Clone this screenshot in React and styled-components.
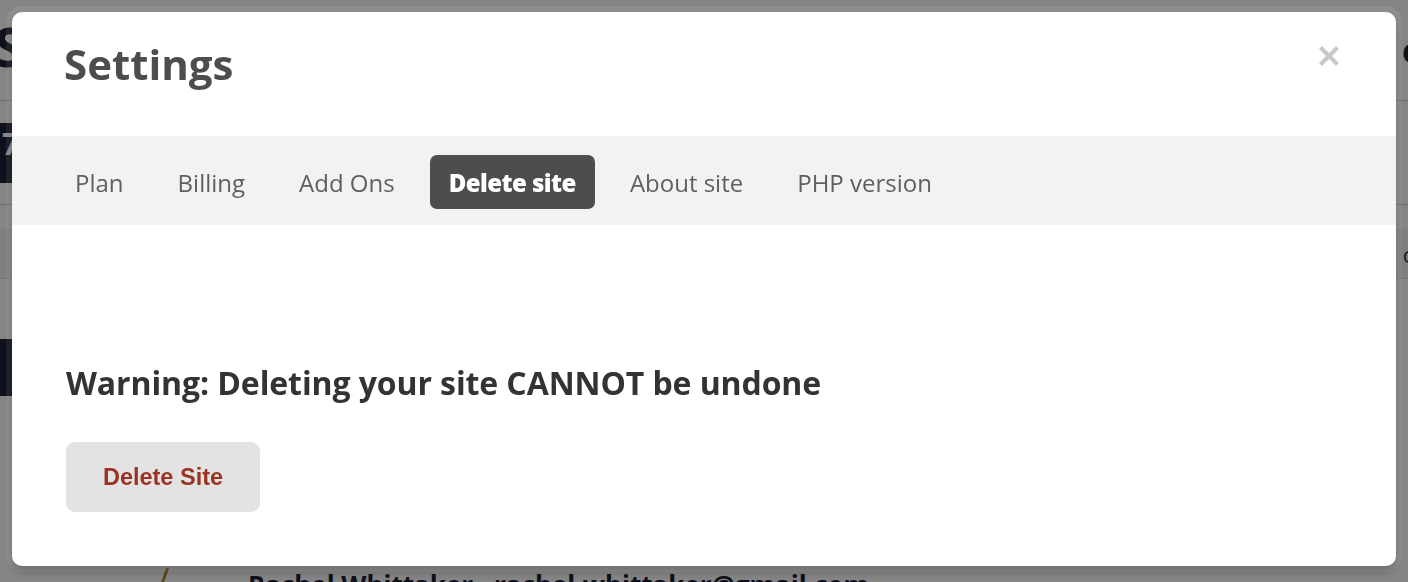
import React from 'react';
import styled, { createGlobalStyle } from 'styled-components';

const GlobalStyle = createGlobalStyle`
  * { box-sizing: border-box; }
  body {
    margin: 0;
    font-family: "Open Sans", "DejaVu Sans", sans-serif;
    background: #fff;
    overflow: hidden;
  }
`;

const tabs = ['Plan', 'Billing', 'Add Ons', 'Delete site', 'About site', 'PHP version'];

const Page = styled.div`
  height: 582px;
  overflow: hidden;
  background: #fff;
`;

const PageHeader = styled.header`
  height: 101px;
  display: flex;
  justify-content: space-between;
  align-items: center;
  border-bottom: 1px solid #cfcfcf;
`;

const PageTitle = styled.h1`
  margin: 0 0 8px -6px;
  font-size: 54px;
  font-weight: 700;
  color: #1b2033;
`;

const HeaderLink = styled.span`
  margin-right: -14px;
  font-size: 34px;
  font-weight: 700;
  color: #1b2033;
`;

const Toolbar = styled.div`
  height: 104px;
  display: flex;
  align-items: flex-start;
  padding-top: 22px;
  border-bottom: 1px solid #cfcfcf;
`;

const DarkButton = styled.div`
  width: 140px;
  height: ${p => p.$h}px;
  background: #1b2033;
  color: #fff;
  font-size: 30px;
  font-weight: 700;
  padding-left: 2px;
`;

const TableHead = styled.div`
  height: 50px;
  margin-top: 24px;
  display: flex;
  justify-content: flex-end;
  align-items: center;
  background: #f3f3f3;
  border-bottom: 1px solid #ddd;
  font-size: 22px;
  color: #333;
  span { margin-right: -8px; }
`;

const Banner = styled.div`
  height: 57px;
  margin-top: 60px;
  width: 120px;
  background: #1b2033;
`;

const Row = styled.div`
  margin-top: 171px;
  display: flex;
  align-items: center;
  gap: 70px;
  padding-left: 160px;
  font-size: 26px;
  font-weight: 700;
  color: #1b2033;
`;

const Avatar = styled.div`
  width: 18px;
  height: 34px;
  border-left: 3px solid #b08a2e;
  transform: skewX(-20deg);
`;

const Overlay = styled.div`
  position: fixed;
  inset: 0;
  background: rgba(0, 0, 0, 0.48);
  padding: 12px 12px 16px;
  display: flex;
`;

const Modal = styled.div`
  position: relative;
  flex: 1;
  background: #fff;
  border-radius: 10px;
  box-shadow: 0 0 0 6px rgba(255, 255, 255, 0.07), 0 6px 10px rgba(0, 0, 0, 0.25);
  display: flex;
  flex-direction: column;
  overflow: hidden;
`;

const Header = styled.div`
  height: 124px;
  padding: 31px 52px 0;
`;

const Title = styled.h2`
  margin: 0;
  font-size: 42px;
  line-height: 1;
  font-weight: 700;
  color: #4d4d4d;
`;

const Close = styled.button`
  position: absolute;
  top: 32px;
  right: 55px;
  width: 24px;
  height: 24px;
  padding: 0;
  border: 0;
  background: none;
  display: flex;
  align-items: center;
  justify-content: center;
`;

const TabBar = styled.nav`
  height: 89px;
  background: #f2f2f2;
  display: flex;
  align-items: center;
  gap: 16px;
  padding: 3px 0 0 44px;
`;

const Tab = styled.div`
  height: 54px;
  padding: 0 19px;
  display: flex;
  align-items: center;
  border-radius: 7px;
  font-size: 24px;
  font-weight: ${p => (p.$active ? 800 : 400)};
  letter-spacing: ${p => (p.$active ? '-0.55px' : '0')};
  color: ${p => (p.$active ? '#fff' : '#5f5f5f')};
  background: ${p => (p.$active ? '#4d4d4d' : 'transparent')};
`;

const Body = styled.div`
  padding: 139px 54px 0;
`;

const Warning = styled.h3`
  margin: 0;
  font-size: 32px;
  line-height: 38px;
  font-weight: 700;
  color: #333;
  letter-spacing: -0.1px;
`;

const DeleteButton = styled.button`
  margin-top: 40px;
  width: 194px;
  height: 70px;
  border: 0;
  border-radius: 9px;
  background: #e3e3e3;
  font-family: "Liberation Sans", Arial, sans-serif;
  font-size: 23.5px;
  font-weight: 700;
  color: #9b3322;
`;

export default function App() {
  return (
    <>
      <GlobalStyle />
      <Page>
        <PageHeader>
          <PageTitle>Sites</PageTitle>
          <HeaderLink>e</HeaderLink>
        </PageHeader>
        <Toolbar>
          <DarkButton $h={60}>7</DarkButton>
        </Toolbar>
        <TableHead><span>o</span></TableHead>
        <Banner />
        <Row>
          <Avatar />
          <span>Rachel Whittaker · rachel.whittaker@gmail.com</span>
        </Row>
      </Page>
      <Overlay>
        <Modal>
          <Header>
            <Title>Settings</Title>
          </Header>
          <Close aria-label="Close">
            <svg width="20" height="20" viewBox="0 0 20 20">
              <path d="M3 3L17 17M17 3L3 17" stroke="#c8c8c8" strokeWidth="4.2" strokeLinecap="square" />
            </svg>
          </Close>
          <TabBar>
            {tabs.map(t => (
              <Tab key={t} $active={t === 'Delete site'}>{t}</Tab>
            ))}
          </TabBar>
          <Body>
            <Warning>Warning: Deleting your site CANNOT be undone</Warning>
            <DeleteButton>Delete Site</DeleteButton>
          </Body>
        </Modal>
      </Overlay>
    </>
  );
}
